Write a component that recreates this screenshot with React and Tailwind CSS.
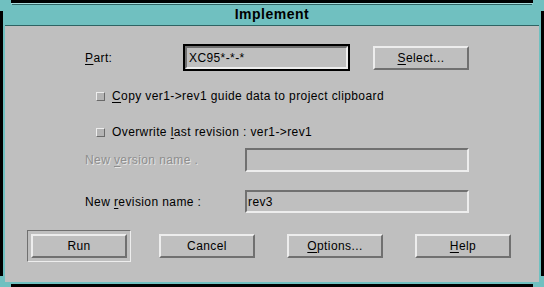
import React from 'react';

const font = { fontFamily: '"Liberation Sans", Arial, sans-serif' };

// 볼록한 모티프 버튼
function MotifButton({ children, className = '' }) {
  return (
    <div
      className={`flex h-[24px] w-[96px] items-center justify-center border-2 border-t-[#ededed] border-l-[#ededed] border-b-[#707070] border-r-[#707070] bg-[#bfbfbf] text-[12px] tracking-[0.4px] text-black ${className}`}
    >
      {children}
    </div>
  );
}

function Mn({ children }) {
  return <span className="underline underline-offset-2">{children}</span>;
}

function CheckRow({ children, className = '' }) {
  return (
    <div className={`flex h-[16px] items-center pl-[91px] ${className}`}>
      <div className="h-[9px] w-[9px] border border-t-[#ededed] border-l-[#ededed] border-b-[#6a6a6a] border-r-[#6a6a6a] bg-[#b4b4b4]" />
      <span className="ml-[7px] text-[12px] tracking-[0.4px] text-black">{children}</span>
    </div>
  );
}

export default function App() {
  return (
    <div className="relative h-[287px] w-[544px] bg-black pt-[3px] px-[3px] pb-[3px] select-none" style={font}>
      <div className="flex h-full flex-col bg-[#70c0c0] px-[2px] pb-[2px]">
        {/* 타이틀 바 */}
        <div className="flex h-[23px] flex-col">
          <div className="h-[1px] bg-[#a8dcdc]" />
          <div className="h-[1px]" />
          <div className="mx-[7px] h-[1px] bg-[#2f6464]" />
          <div className="flex flex-1 items-center justify-center text-[14px] font-bold text-black tracking-[0.5px]">
            Implement
          </div>
          <div className="h-[1px] bg-[#2f6464]" />
          <div className="h-[1px] bg-[#a8dcdc]" />
        </div>

        {/* 본문 */}
        <div className="flex flex-1 flex-col bg-[#bfbfbf] pt-[18px]">
          <div className="flex h-[27px] items-center">
            <div className="w-[178px] pl-[80px] text-[12px] tracking-[0.4px] text-black">
              <Mn>P</Mn>art:
            </div>
            <div className="flex h-[27px] w-[167px] items-center border-2 border-black">
              <div className="flex h-full w-full items-center border-2 border-t-[#707070] border-l-[#707070] border-b-[#ededed] border-r-[#ededed] pl-[2px] text-[12px] tracking-[0.4px] text-black">
                XC95*-*-*
              </div>
            </div>
            <MotifButton className="ml-[23px] h-[22px] w-[95px]">
              <Mn>S</Mn>elect...
            </MotifButton>
          </div>

          <CheckRow className="mt-[17px]">
            <Mn>C</Mn>opy ver1-&gt;rev1 guide data to project clipboard
          </CheckRow>
          <CheckRow className="mt-[20px]">
            Overwrite <Mn>l</Mn>ast revision : ver1-&gt;rev1
          </CheckRow>

          <div className="mt-[8px] flex h-[24px] items-center">
            <div className="w-[240px] pl-[80px] text-[12px] tracking-[0.4px] text-[#8e8e8e] [text-shadow:1px_1px_0_#e4e4e4]">
              New <Mn>v</Mn>ersion name .
            </div>
            <div className="h-[24px] w-[224px] border-2 border-t-[#707070] border-l-[#707070] border-b-[#ededed] border-r-[#ededed]" />
          </div>

          <div className="mt-[18px] flex h-[23px] items-center">
            <div className="w-[240px] pl-[80px] text-[12px] tracking-[0.4px] text-black">
              New <Mn>r</Mn>evision name :
            </div>
            <div className="flex h-[23px] w-[224px] items-center border-2 border-t-[#707070] border-l-[#707070] border-b-[#ededed] border-r-[#ededed] pl-[1px] text-[12px] tracking-[0.4px] text-black">
              rev3
            </div>
          </div>

          <div className="mt-[17px] flex items-center pl-[22px]">
            <div className="flex h-[32px] w-[104px] items-center justify-center border border-t-[#707070] border-l-[#707070] border-b-[#ededed] border-r-[#ededed]">
              <MotifButton>Run</MotifButton>
            </div>
            <MotifButton className="ml-[28px]">Cancel</MotifButton>
            <MotifButton className="ml-[32px]">
              <Mn>O</Mn>ptions...
            </MotifButton>
            <MotifButton className="ml-[32px]">
              <Mn>H</Mn>elp
            </MotifButton>
          </div>
        </div>
      </div>

      {/* 창 모서리 크기조절 핸들 */}
      <div className="absolute left-0 top-0 h-[11px] w-[11px] border-l-[4px] border-t-[4px] border-[#70c0c0]" />
      <div className="absolute right-0 top-0 h-[11px] w-[11px] border-r-[4px] border-t-[4px] border-[#70c0c0]" />
      <div className="absolute bottom-0 left-0 h-[11px] w-[11px] border-b-[4px] border-l-[4px] border-[#70c0c0]" />
      <div className="absolute bottom-0 right-0 h-[11px] w-[11px] border-b-[4px] border-r-[4px] border-[#70c0c0]" />
    </div>
  );
}
